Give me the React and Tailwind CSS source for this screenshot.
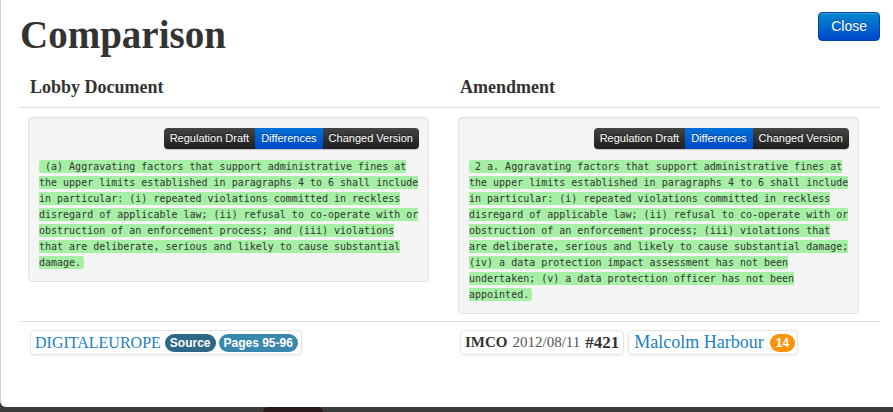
const serif = { fontFamily: '"Liberation Serif", "Times New Roman", serif' }

const lobbyText =
  '\u00a0(a) Aggravating factors that support administrative fines at the upper limits established in paragraphs 4 to 6 shall include in particular: (i) repeated violations committed in reckless disregard of applicable law; (ii) refusal to co-operate with or obstruction of an enforcement process; and (iii) violations that are deliberate, serious and likely to cause substantial damage.'

const amendmentText =
  '\u00a02 a. Aggravating factors that support administrative fines at the upper limits established in paragraphs 4 to 6 shall include in particular: (i) repeated violations committed in reckless disregard of applicable law; (ii) refusal to co-operate with or obstruction of an enforcement process; (iii) violations that are deliberate, serious and likely to cause substantial damage; (iv) a data protection impact assessment has not been undertaken; (v) a data protection officer has not been appointed.'

function ViewSwitch() {
  const tabs = ['Regulation Draft', 'Differences', 'Changed Version']
  return (
    <div className="flex justify-end">
      <div className="flex h-[21px] rounded-[4px] overflow-hidden bg-gradient-to-b from-[#444] to-[#1e1e1e] shadow-[0_1px_1px_rgba(0,0,0,0.2)]">
        {tabs.map((t) => (
          <span
            key={t}
            className={
              t === 'Differences'
                ? 'px-[6px] flex items-center text-[11px] text-white bg-gradient-to-b from-[#0070d8] to-[#0048c8] [text-shadow:0_-1px_0_rgba(0,0,0,0.35)]'
                : 'px-[6px] flex items-center text-[11px] text-white [text-shadow:0_-1px_0_rgba(0,0,0,0.5)]'
            }
          >
            {t}
          </span>
        ))}
      </div>
    </div>
  )
}

function DiffCard({ text }) {
  return (
    <div className="w-[401px] bg-[#f5f5f5] border border-[#e3e3e3] rounded-[4px] pl-[10px] pr-[9px] pt-[10px] pb-[10px] shadow-[inset_0_1px_1px_rgba(0,0,0,0.04)]">
      <ViewSwitch />
      <div
        className="mt-[10px] text-[10px] leading-[16px] text-[#333]"
        style={{ fontFamily: '"DejaVu Sans Mono", "Liberation Mono", monospace' }}
      >
        <span className="bg-[#a6f0a6] rounded-[3px] py-[1px] pr-[3px]">{text}</span>
      </div>
    </div>
  )
}

function Badge({ color, children }) {
  return (
    <span className={`inline-flex items-center h-[18px] px-[5px] rounded-full text-[12px] font-bold text-white ${color}`}>
      {children}
    </span>
  )
}

export default function App() {
  return (
    <div className="h-[412px] bg-[#3b3b3b] flex flex-col overflow-hidden" style={{ fontFamily: '"Liberation Sans", Arial, sans-serif' }}>
      <div className="h-[407px] bg-white border-l border-[#d4d4d4] rounded-bl-[6px]">
        <div className="w-[860px] ml-[19px]">
          <div className="flex items-start justify-between pt-[12px]">
            <h1 className="mt-[1px] text-[39px] leading-[44px] font-bold text-[#333]" style={serif}>
              Comparison
            </h1>
            <button className="h-[29px] px-[12px] rounded-[4px] text-[14px] text-white bg-gradient-to-b from-[#0088cc] to-[#0044cc] border border-[#0044aa] shadow-[inset_0_1px_0_rgba(255,255,255,0.2)] [text-shadow:0_-1px_0_rgba(0,0,0,0.25)]">
              Close
            </button>
          </div>

          <div className="grid grid-cols-2 mt-[10px] border-b border-[#ddd] py-[8px]">
            {['Lobby Document', 'Amendment'].map((h) => (
              <div key={h} className="pl-[10px] text-[18px] leading-[24px] font-bold text-[#333]" style={serif}>
                {h}
              </div>
            ))}
          </div>

          <div className="grid grid-cols-2 items-start pt-[9px] pb-[7px] border-b border-[#ddd]">
            <div className="pl-[8px]">
              <DiffCard text={lobbyText} />
            </div>
            <div className="pl-[8px]">
              <DiffCard text={amendmentText} />
            </div>
          </div>

          <div className="grid grid-cols-2 items-start pt-[8px]">
            <div className="pl-[10px] flex">
              <div className="flex items-center gap-[3px] h-[25px] pl-[4px] pr-[3px] bg-white border border-[#e6e6e6] rounded-[4px] shadow-[0_1px_2px_rgba(0,0,0,0.06)]">
                <span className="text-[16px] text-[#1a7fc4] mr-[1px]" style={serif}>DIGITALEUROPE</span>
                <Badge color="bg-[#2d6987]">Source</Badge>
                <Badge color="bg-[#3a87ad]">Pages 95-96</Badge>
              </div>
            </div>
            <div className="pl-[10px] flex gap-[4px]">
              <div className="flex items-center h-[25px] px-[4px] bg-white border border-[#e6e6e6] rounded-[4px] shadow-[0_1px_2px_rgba(0,0,0,0.06)] text-[#333]" style={serif}>
                <span className="text-[15px] font-bold">IMCO</span>
                <span className="ml-[5px] text-[15px] text-[#555]">2012/08/11</span>
                <span className="ml-[5px] text-[17px] font-bold">#421</span>
              </div>
              <div className="flex items-center h-[25px] pl-[5px] pr-[2px] bg-white border border-[#e6e6e6] rounded-[4px] shadow-[0_1px_2px_rgba(0,0,0,0.06)]">
                <span className="text-[18px] text-[#1a7fc4] mr-[6px]" style={serif}>Malcolm Harbour</span>
                <Badge color="bg-[#f89406] px-[6px]">14</Badge>
              </div>
            </div>
          </div>
        </div>
      </div>
      <div className="flex-1 flex">
        <div className="ml-[263px] w-[60px] bg-[#2a1a1a] rounded-t-[6px]" />
      </div>
    </div>
  )
}
